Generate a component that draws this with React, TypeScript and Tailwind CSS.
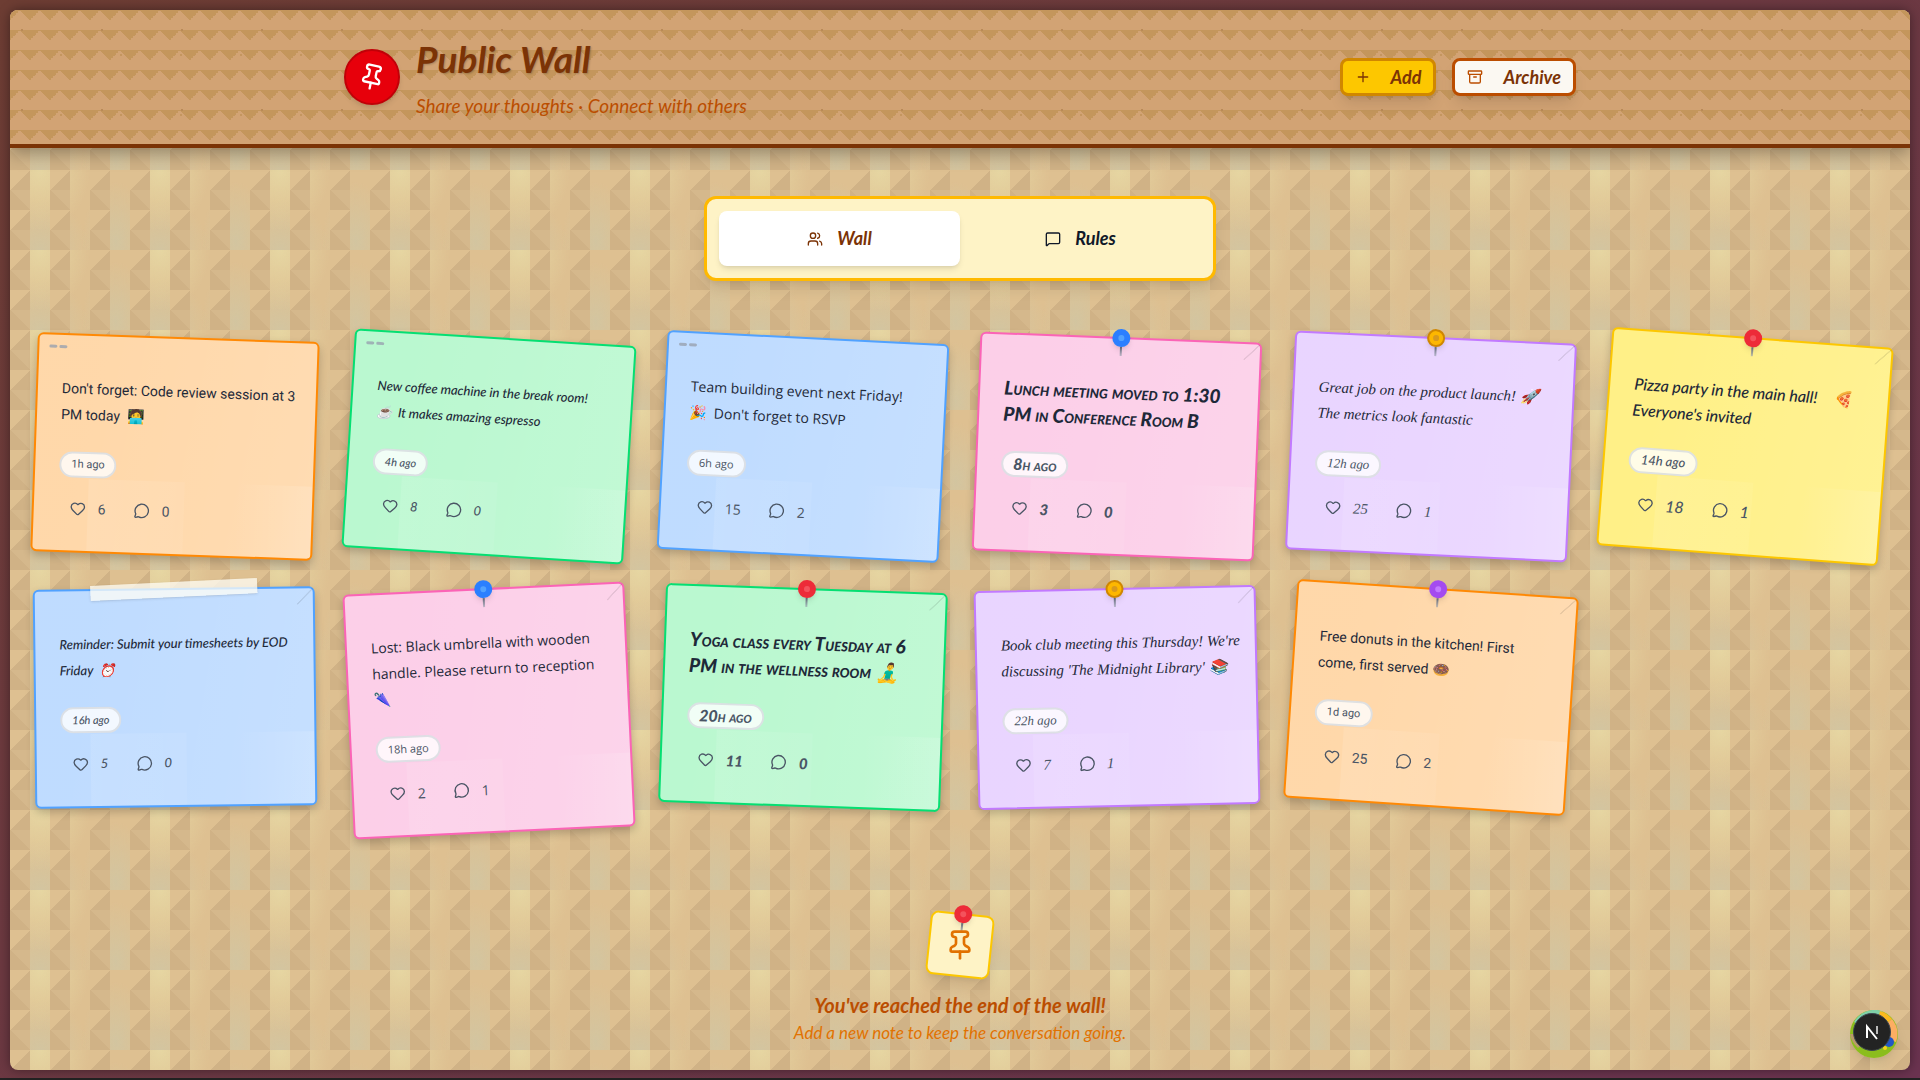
import React from 'react';
import { Archive, Heart, MessageCircle, MessageSquare, Pin, Plus, Users } from 'lucide-react';
import { clsx } from 'clsx';

type Color = 'orange' | 'green' | 'blue' | 'pink' | 'purple' | 'yellow';
type Hand = 'thin' | 'brush' | 'round' | 'marker' | 'script' | 'pen';
type Fastener = 'staple' | 'tape' | 'pin-blue' | 'pin-gold' | 'pin-red' | 'pin-purple';

interface Note {
  text: string;
  age: string;
  likes: number;
  comments: number;
  color: Color;
  hand: Hand;
  fastener: Fastener;
  tilt: string;
}

const notes: Note[] = [
  { text: "Don't forget: Code review session at 3\nPM today  🧑‍💻", age: '1h ago', likes: 6, comments: 0, color: 'orange', hand: 'thin', fastener: 'staple', tilt: 'rotate-[2deg]' },
  { text: 'New coffee machine in the break room!\n☕  It makes amazing espresso', age: '4h ago', likes: 8, comments: 0, color: 'green', hand: 'brush', fastener: 'staple', tilt: 'rotate-[3.6deg]' },
  { text: "Team building event next Friday!\n🎉  Don't forget to RSVP", age: '6h ago', likes: 15, comments: 2, color: 'blue', hand: 'round', fastener: 'staple', tilt: 'rotate-[2.9deg]' },
  { text: 'Lunch meeting moved to 1:30\nPM in Conference Room B', age: '8h ago', likes: 3, comments: 0, color: 'pink', hand: 'marker', fastener: 'pin-blue', tilt: 'rotate-[2.3deg]' },
  { text: 'Great job on the product launch! 🚀\nThe metrics look fantastic', age: '12h ago', likes: 25, comments: 1, color: 'purple', hand: 'script', fastener: 'pin-gold', tilt: 'rotate-[2.7deg]' },
  { text: "Pizza party in the main hall!    🍕\nEveryone's invited", age: '14h ago', likes: 18, comments: 1, color: 'yellow', hand: 'pen', fastener: 'pin-red', tilt: 'rotate-[4.3deg]' },
  { text: 'Reminder: Submit your timesheets by EOD\nFriday  ⏰', age: '16h ago', likes: 5, comments: 0, color: 'blue', hand: 'brush', fastener: 'tape', tilt: 'rotate-[-0.7deg]' },
  { text: 'Lost: Black umbrella with wooden\nhandle. Please return to reception\n🌂', age: '18h ago', likes: 2, comments: 1, color: 'pink', hand: 'round', fastener: 'pin-blue', tilt: 'rotate-[-2.7deg]' },
  { text: 'Yoga class every Tuesday at 6\nPM in the wellness room 🧘‍♂️', age: '20h ago', likes: 11, comments: 0, color: 'green', hand: 'marker', fastener: 'pin-red', tilt: 'rotate-[2.1deg]' },
  { text: "Book club meeting this Thursday! We're\ndiscussing 'The Midnight Library' 📚", age: '22h ago', likes: 7, comments: 1, color: 'purple', hand: 'script', fastener: 'pin-gold', tilt: 'rotate-[-1.3deg]' },
  { text: 'Free donuts in the kitchen! First\ncome, first served 🍩', age: '1d ago', likes: 25, comments: 2, color: 'orange', hand: 'thin', fastener: 'pin-purple', tilt: 'rotate-[3.8deg]' },
];

const paper: Record<Color, string> = {
  orange: 'bg-orange-200 border-orange-400',
  green: 'bg-green-200 border-green-400',
  blue: 'bg-blue-200 border-blue-400',
  pink: 'bg-pink-200 border-pink-400',
  purple: 'bg-purple-200 border-purple-400',
  yellow: 'bg-yellow-200 border-yellow-400',
};

const handwriting: Record<Hand, string> = {
  thin: "font-['Roboto',sans-serif] text-[14px]",
  brush: "font-['Lato',sans-serif] text-[13px] font-medium italic",
  round: "font-['Open_Sans',sans-serif] text-[14px]",
  marker: "font-['Lato',sans-serif] text-[19px] font-black italic [font-variant-caps:small-caps]",
  script: "font-['Liberation_Serif',serif] text-[15px] italic",
  pen: "font-['Lato',sans-serif] text-[16px] font-medium italic",
};

const ageSize: Record<Hand, string> = {
  thin: 'text-[11px]',
  brush: 'text-[11px]',
  round: 'text-[11px]',
  marker: 'text-[16px]',
  script: 'text-[13px]',
  pen: 'text-[13px]',
};

const pinHead: Record<string, string> = {
  'pin-blue': 'bg-[#2b7fff] after:bg-[#51a2ff]',
  'pin-gold': 'bg-[#fdb700] border-2 border-[#d08700] after:bg-[#d99a1c]',
  'pin-red': 'bg-[#ed2b38] after:bg-[#f4525c]',
  'pin-purple': 'bg-[#a44bf0] after:bg-[#c27aff]',
};

function PushPin({ kind }: { kind: string }) {
  return (
    <div className="absolute -top-[10px] left-1/2 flex -translate-x-1/2 flex-col items-center">
      <span
        className={clsx(
          'relative z-10 size-[18px] rounded-full shadow-md after:absolute after:inset-0 after:m-auto after:size-[6px] after:rounded-full',
          pinHead[kind],
        )}
      />
      <span className="h-[9px] w-[2px] bg-gradient-to-b from-gray-500 to-gray-400/60" />
    </div>
  );
}

function Fastening({ kind }: { kind: Fastener }) {
  if (kind === 'staple') {
    return (
      <div className="absolute top-[10px] left-[10px] flex gap-[2px]">
        <span className="h-[3px] w-2 rounded-sm bg-gray-400/80" />
        <span className="h-[3px] w-2 rounded-sm bg-gray-400/80" />
      </div>
    );
  }
  return (
    <>
      {/* folded corner */}
      <span className="absolute top-0 right-0 size-4 bg-[linear-gradient(135deg,transparent_46%,rgb(0_0_0/0.09)_48%,rgb(0_0_0/0.09)_52%,transparent_54%)]" />
      {kind === 'tape' ? (
        <span className="absolute -top-2 left-1/2 h-[15px] w-3/5 -translate-x-1/2 -rotate-2 bg-[#fffdf5]/75 shadow-sm" />
      ) : (
        <PushPin kind={kind} />
      )}
    </>
  );
}

function NoteCard({ note }: { note: Note }) {
  return (
    <article
      className={clsx(
        'relative self-start rounded-md border-2 px-6 pt-10 pb-[27px] shadow-[0_4px_8px_rgb(0_0_0/0.2)]',
        'bg-[linear-gradient(100deg,rgb(255_255_255/0.02)_20%,rgb(255_255_255/0.12)),linear-gradient(90deg,rgb(255_255_255/0.1),rgb(255_255_255/0.06)),linear-gradient(90deg,transparent,rgb(255_255_255/0.14))] bg-[size:100%_100%,96px_72px,78px_72px] bg-[position:0_0,54px_100%,100%_100%] bg-no-repeat',
        paper[note.color],
        handwriting[note.hand],
        note.tilt,
      )}
    >
      <Fastening kind={note.fastener} />
      <p className="leading-[26px] whitespace-pre text-gray-800">{note.text}</p>
      <time
        className={clsx(
          'mt-6 flex h-[26px] w-fit items-center rounded-full border-2 border-gray-300/70 bg-white/80 px-[10px] text-gray-600',
          ageSize[note.hand],
        )}
      >
        {note.age}
      </time>
      <div className={clsx('mt-4 flex gap-1 text-gray-600', note.hand === 'marker' && 'text-[15px]')}>
        <button type="button" aria-label="Like" className="flex h-[30px] items-center gap-3 px-3">
          <Heart className="size-4" />
          {note.likes}
        </button>
        <button type="button" aria-label="Comment" className="flex h-[30px] items-center gap-3 px-3">
          <MessageCircle className="size-4" />
          {note.comments}
        </button>
      </div>
    </article>
  );
}

function Header() {
  return (
    <header className="relative z-10 border-b-4 border-amber-900 bg-[#d2a374] bg-[radial-gradient(circle_at_12px_20px,#b98a58_1px,transparent_1px),radial-gradient(circle_at_51px_45px,#c4965f_1px,transparent_1px),linear-gradient(45deg,transparent_75%,#c4965c_75%),linear-gradient(-45deg,transparent_75%,#c4965c_75%)] bg-[size:80px_80px,60px_60px,20px_20px,20px_20px] shadow-[0_6px_16px_rgb(0_0_0/0.3)]">
      <div className="mx-auto flex max-w-7xl items-center justify-between px-6 py-6">
        <div className="flex items-center gap-4">
          <div className="flex size-14 items-center justify-center rounded-full border-2 border-red-700 bg-red-600 text-white shadow-md">
            <Pin className="size-7 rotate-12" />
          </div>
          <div>
            <h1 className="text-[37px] leading-[50px] font-bold text-amber-900 [text-shadow:1px_1px_2px_rgb(0_0_0/0.2)]">
              Public Wall
            </h1>
            <p className="mt-2 text-[19px] leading-7 text-amber-700">Share your thoughts · Connect with others</p>
          </div>
        </div>
        <div className="flex gap-4">
          <button
            type="button"
            className="flex h-[38px] items-center gap-5 rounded-lg border-3 border-yellow-600 bg-yellow-400 px-3 text-[18px] font-bold text-amber-900 shadow-lg"
          >
            <Plus className="size-4" />
            Add
          </button>
          <button
            type="button"
            className="flex h-[38px] items-center gap-5 rounded-lg border-3 border-amber-700 bg-[#fbf8f2] px-3 text-[18px] font-bold text-amber-900 shadow-lg"
          >
            <Archive className="size-4 text-amber-700" />
            Archive
          </button>
        </div>
      </div>
    </header>
  );
}

export default function App() {
  return (
    <div className="min-h-screen border-b-2 border-[#222222] bg-gradient-to-br from-[#6d3d33] to-[#6b3350] px-2.5 pt-2.5 pb-2 font-['Lato',sans-serif] italic">
      <div className="relative min-h-[calc(100vh-20px)] overflow-hidden rounded-lg bg-[#dec091] bg-[conic-gradient(at_0px_20px,#dec091_45deg,#d0b286_45deg_90deg,#d5b88c_90deg_135deg,#d0b286_135deg)] bg-[size:40px_40px] shadow-[0_0_12px_rgb(0_0_0/0.4)]">
        {/* woven strips between the triangle columns */}
        <div className="absolute inset-0 bg-[#dec091] bg-[radial-gradient(50px_60px_at_30px_0px,#e6d6a2,transparent),radial-gradient(50px_50px_at_30px_80px,#d3c5a0,transparent),radial-gradient(34px_60px_at_106px_72px,#d3c5a0,transparent)] bg-[size:120px_80px] [mask-image:linear-gradient(90deg,transparent_50%,black_50%)] [mask-size:40px_100%]" />
        <Header />
        <main className="relative px-6 pt-12">
          <div
            role="tablist"
            className="mx-auto grid max-w-lg grid-cols-2 rounded-xl border-3 border-amber-400 bg-amber-100 p-3 text-[18px] font-bold shadow-lg"
          >
            <button
              type="button"
              role="tab"
              aria-selected="true"
              className="flex h-[55px] items-center justify-center gap-3.5 rounded-lg bg-white text-amber-900 shadow-md"
            >
              <Users className="size-4" />
              Wall
            </button>
            <button
              type="button"
              role="tab"
              aria-selected="false"
              className="flex h-[55px] items-center justify-center gap-3.5 rounded-lg text-gray-900"
            >
              <MessageSquare className="size-4" />
              Rules
            </button>
          </div>

          <section className="mt-14 grid grid-cols-6 gap-8 not-italic">
            {notes.map((note) => (
              <NoteCard key={note.age} note={note} />
            ))}
          </section>

          <footer className="mt-20 flex flex-col items-center">
            <div className="relative flex size-16 rotate-6 items-center justify-center rounded-lg border-2 border-yellow-400 bg-amber-100 text-amber-600 shadow-lg">
              <PushPin kind="pin-red" />
              <Pin className="size-8 -rotate-6" />
            </div>
            <p className="mt-3.5 text-[20px] leading-7 font-bold text-amber-700">You've reached the end of the wall!</p>
            <p className="text-[17px] leading-7 text-amber-600">Add a new note to keep the conversation going.</p>
          </footer>
        </main>
      </div>

      {/* floating dev badge */}
      <button type="button" aria-label="Open tools" className="fixed right-[22px] bottom-[22px] size-12 rounded-full shadow-lg">
        <svg viewBox="0 0 48 48" className="size-12">
          <circle cx="24" cy="24" r="24" fill="#8bbd1c" />
          <path d="M4 12A24 24 0 0 1 32 1L24 24Z" fill="#7fd0a8" />
          <path d="M30 1A24 24 0 0 1 42 9L24 24Z" fill="#fbb91f" />
          <path d="M42 9A24 24 0 0 1 46 32L24 24Z" fill="#fdae63" />
          <path d="M0 24A24 24 0 0 0 8 38L24 24Z" fill="#b99a6a" />
          <circle cx="39" cy="32" r="5" fill="#2356c5" />
          <circle cx="35" cy="38" r="2" fill="#f6d21b" />
          <circle cx="22" cy="22" r="18.5" fill="#232323" stroke="#3c4650" />
          <path d="M17 28V16.500L27 29" fill="none" stroke="#fff" strokeWidth="2" />
          <path d="M27 16V24" fill="none" stroke="#bbb" strokeWidth="2" />
        </svg>
      </button>
    </div>
  );
}
